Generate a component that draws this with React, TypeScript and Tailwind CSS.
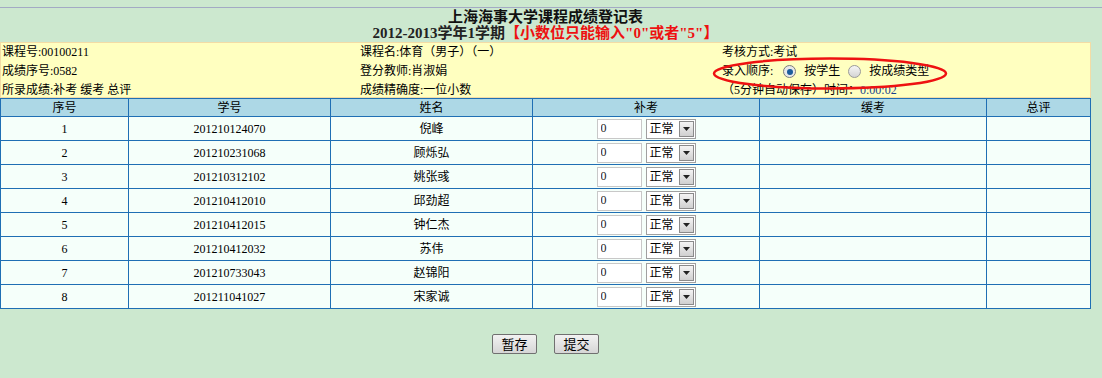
const rows = [
  { no: 1, id: '201210124070', name: '倪峰' },
  { no: 2, id: '201210231068', name: '顾烁弘' },
  { no: 3, id: '201210312102', name: '姚张彧' },
  { no: 4, id: '201210412010', name: '邱劲超' },
  { no: 5, id: '201210412015', name: '钟仁杰' },
  { no: 6, id: '201210412032', name: '苏伟' },
  { no: 7, id: '201210733043', name: '赵锦阳' },
  { no: 8, id: '201211041027', name: '宋家诚' },
];

const font = { fontFamily: '"Liberation Serif", "Noto Sans CJK SC", serif' };

function ScoreCell() {
  return (
    <div className="flex items-center justify-center gap-1">
      <input
        readOnly
        value="0"
        className="w-[45px] h-[20px] bg-white border border-[#c8c8c8] px-[3px] text-[12px] text-[#1a1a1a] outline-none"
      />
      <div className="w-[50px] h-[20px] border border-[#a0a0a0] bg-white flex items-center justify-between pl-[3px] pr-px text-[12px] leading-none">
        <span>正常</span>
        <span className="w-[15px] h-[16px] bg-gradient-to-b from-[#f4f4f4] to-[#d0d0d0] border border-[#8a8a8a] flex items-center justify-center">
          <svg width="7" height="4" viewBox="0 0 7 4"><path d="M0 0h7L3.5 4z" fill="#222" /></svg>
        </span>
      </div>
    </div>
  );
}

export default function App() {
  return (
    <div className="w-[1102px] h-[378px] bg-[#cce8cf] text-black overflow-hidden" style={font}>
      <div className="h-[7px]" />
      <div className="h-px bg-[#a3aac4]" />
      <div className="w-[1091px]">
        <div className="text-center font-bold text-[15px] leading-[16px] pt-[1px] text-[#111]">上海海事大学课程成绩登记表</div>
        <div className="text-center font-bold text-[15px] leading-[16px] text-[#222]">
          2012-2013学年1学期<span className="text-[#ee1111]">【小数位只能输入"0"或者"5"】</span>
        </div>
        <div className="relative mt-[1px] h-[56px] bg-[#ffffc0] border border-[#f3dca6] text-[12px] leading-[19px] grid grid-cols-[358px_362px_1fr] pl-px">
          <div>
            <div>课程号:00100211</div>
            <div>成绩序号:0582</div>
            <div>所录成绩:补考 缓考 总评</div>
          </div>
          <div>
            <div>课程名:体育（男子）（一）</div>
            <div>登分教师:肖淑娟</div>
            <div>成绩精确度:一位小数</div>
          </div>
          <div>
            <div>考核方式:考试</div>
            <div className="flex items-center">
              <span>录入顺序:</span>
              <span className="ml-[10px] w-[13px] h-[13px] rounded-full border border-[#7c7c7c] bg-[#e8e8e8] flex items-center justify-center">
                <span className="w-[6px] h-[6px] rounded-full bg-[#1c5c9c]" />
              </span>
              <span className="ml-[8px]">按学生</span>
              <span className="ml-[8px] w-[13px] h-[13px] rounded-full border border-[#9a9a9a] bg-gradient-to-b from-[#f6f6f6] to-[#d4d4d4]" />
              <span className="ml-[8px]">按成绩类型</span>
            </div>
            <div>
              （5分钟自动保存）时间：<span className="text-[#1a3f8a]">0:00:02</span>
            </div>
          </div>
          <svg className="absolute left-[711px] top-[14px]" width="236" height="33" viewBox="0 0 236 33">
            <ellipse cx="118" cy="16.5" rx="116" ry="15" fill="none" stroke="#ee1111" strokeWidth="2.5" />
          </svg>
        </div>
        <table className="w-[1091px] border-collapse text-[12px] table-fixed">
          <colgroup>
            <col className="w-[128px]" />
            <col className="w-[202px]" />
            <col className="w-[202px]" />
            <col className="w-[227px]" />
            <col className="w-[227px]" />
            <col />
          </colgroup>
          <thead>
            <tr className="bg-[#add8e6] h-[18px]">
              {['序号', '学号', '姓名', '补考', '缓考', '总评'].map((h) => (
                <th key={h} className="border border-[#1f6fb4] font-normal leading-[16px] p-0">{h}</th>
              ))}
            </tr>
          </thead>
          <tbody>
            {rows.map((r) => (
              <tr key={r.no} className="bg-[#f5fffa] h-[24px]">
                <td className="border border-[#1f6fb4] text-center p-0">{r.no}</td>
                <td className="border border-[#1f6fb4] text-center p-0">{r.id}</td>
                <td className="border border-[#1f6fb4] text-center p-0">{r.name}</td>
                <td className="border border-[#1f6fb4] p-0"><ScoreCell /></td>
                <td className="border border-[#1f6fb4] p-0" />
                <td className="border border-[#1f6fb4] p-0" />
              </tr>
            ))}
          </tbody>
        </table>
        <div className="flex justify-center gap-[17px] mt-[25px]">
          {['暂存', '提交'].map((b) => (
            <button
              key={b}
              className="w-[45px] h-[20px] border border-[#707070] rounded-[2px] bg-gradient-to-b from-[#f2f2f2] to-[#d6d6d6] text-[13px] leading-none"
            >
              {b}
            </button>
          ))}
        </div>
      </div>
    </div>
  );
}
